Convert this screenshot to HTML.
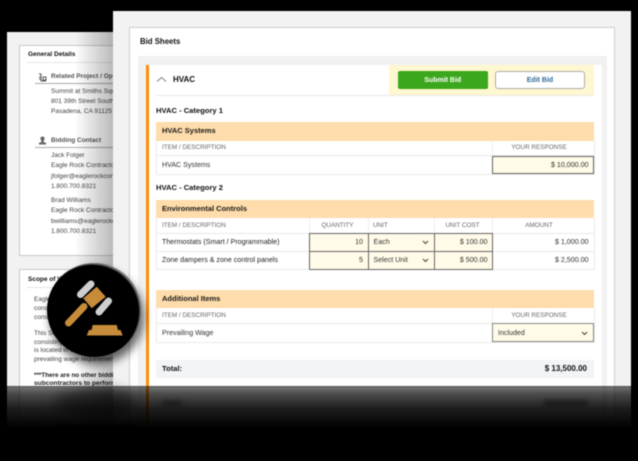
<!DOCTYPE html>
<html><head><meta charset="utf-8">
<style>
html,body{margin:0;padding:0;background:#000;}
#p{position:relative;width:638px;height:461px;overflow:hidden;background:#000;font-family:"Liberation Sans",sans-serif;}
#w{position:absolute;left:0;top:0;width:638px;height:461px;filter:blur(.4px);}
.a{position:absolute;}
.t{position:absolute;white-space:nowrap;line-height:10px;height:10px;color:#333;font-size:7.1px;}
.l{font-size:6.5px;color:#444;}
.b{font-weight:bold;color:#111;}
.band{position:absolute;left:156px;width:438px;height:18.5px;background:#fedcab;}
.band span{position:absolute;left:6px;top:4px;font-size:7.5px;font-weight:bold;line-height:10px;color:#1a1a1a;white-space:nowrap;}
.rowbox{position:absolute;left:156px;width:437px;border:1px solid #eaeaea;border-top:0;}
.hl{position:absolute;left:156px;width:438px;height:1px;background:#e8e8e8;}
.h{color:#666;font-size:6.35px;}
.inp{position:absolute;background:#fffbe8;border:1px solid #666;box-sizing:border-box;}
.dash{position:absolute;width:0;border-left:1px dotted #ddd;}
.r{text-align:right;}
.c{text-align:center;}
</style></head><body>
<div id="p"><div id="w">

<!-- left card -->
<div class="a" style="left:7px;top:32px;width:112px;height:400px;background:#f2f2f2;overflow:hidden;">
  <div class="a" style="left:12px;top:13px;width:110px;height:211px;background:#fff;border:1px solid #c8c8c8;box-sizing:border-box;"></div>
  <div class="a" style="left:12px;top:237px;width:110px;height:200px;background:#fff;border:1px solid #c8c8c8;box-sizing:border-box;"></div>
  <div class="a" style="left:20px;top:30px;width:90px;height:1px;background:#e5e5e5;"></div>
  <div class="a" style="left:28px;top:50.5px;width:90px;height:1px;background:#aaa;"></div>
  <div class="a" style="left:28px;top:114.5px;width:90px;height:1px;background:#aaa;"></div>
  <div class="a" style="left:20px;top:255px;width:90px;height:1px;background:#e5e5e5;"></div>
</div>
<div class="t b" style="left:28px;top:50px;font-size:6.5px;">General Details</div>
<svg class="a" style="left:38px;top:73px;" width="9" height="9" viewBox="0 0 9 9"><path d="M1 1h2v7h5M1 4h2M5 4h3v3H5zM1 6h2" fill="none" stroke="#555" stroke-width="1"/></svg>
<div class="t b l" style="left:51px;top:72px;color:#555;overflow:hidden;width:62px;">Related Project / Opportunity</div>
<div class="t l" style="left:51px;top:87px;">Summit at Smiths Square</div>
<div class="t l" style="left:51px;top:97px;">801 39th Street South</div>
<div class="t l" style="left:51px;top:107px;">Pasadena, CA 91125</div>
<svg class="a" style="left:38px;top:136px;" width="9" height="9" viewBox="0 0 9 9"><circle cx="4.5" cy="2.6" r="2.1" fill="#666"/><path d="M3.5 4h2l.5 2.5h2V8.5H1V6.5h2z" fill="#666"/></svg>
<div class="t b l" style="left:51px;top:136px;color:#555;">Bidding Contact</div>
<div class="t l" style="left:51px;top:151px;">Jack Folger</div>
<div class="t l" style="left:51px;top:161px;">Eagle Rock Contractors</div>
<div class="t l" style="left:51px;top:172px;">jfolger@eaglerockcontractors.com</div>
<div class="t l" style="left:51px;top:182px;">1.800.700.8321</div>
<div class="t l" style="left:51px;top:196px;">Brad Williams</div>
<div class="t l" style="left:51px;top:206px;">Eagle Rock Contractors</div>
<div class="t l" style="left:51px;top:217px;">bwilliams@eaglerockcontractors.com</div>
<div class="t l" style="left:51px;top:227px;">1.800.700.8321</div>
<div class="t b" style="left:28px;top:275px;font-size:6.5px;">Scope of Work</div>
<div class="t l" style="left:34px;top:295px;">Eagle</div>
<div class="t l" style="left:34px;top:304px;">consist</div>
<div class="t l" style="left:34px;top:313px;">consist</div>
<div class="t l" style="left:34px;top:329px;">This Scope</div>
<div class="t l" style="left:34px;top:338px;">consisting of</div>
<div class="t l" style="left:34px;top:346px;">is located in the</div>
<div class="t l" style="left:34px;top:355px;">prevailing wage requirements</div>
<div class="t b l" style="left:34px;top:371px;color:#222;font-size:6.3px;">***There are no other bidding</div>
<div class="t b l" style="left:34px;top:379px;color:#222;font-size:6.6px;">subcontractors to perform</div>
<!-- shadow gradient cast by front card -->
<div class="a" style="left:75px;top:32px;width:38px;height:400px;background:linear-gradient(90deg,rgba(0,0,0,0),rgba(0,0,0,.27));"></div>

<!-- front card -->
<div class="a" style="left:113px;top:11px;width:518px;height:420px;background:#f2f2f2;"></div>
<div class="a" style="left:129px;top:27px;width:486px;height:410px;background:#fff;border:1px solid #cfcfcf;box-sizing:border-box;"></div>
<div class="t b" style="left:140px;top:36.5px;font-size:7.8px;">Bid Sheets</div>
<div class="a" style="left:138px;top:56px;width:469px;height:380px;background:#f1f1f1;"></div>
<div class="a" style="left:146px;top:65px;width:456px;height:370px;background:#fff;"></div>
<div class="a" style="left:146px;top:65px;width:2.5px;height:370px;background:#ff8c00;"></div>

<!-- header -->
<div class="a" style="left:156px;top:95px;width:438px;height:1px;background:#e8e8e8;"></div>
<div class="a" style="left:389px;top:65px;width:205px;height:30px;background:#fff7cf;"></div>
<svg class="a" style="left:156px;top:76px;" width="11" height="7" viewBox="0 0 11 7"><path d="M1 5.5L5.500 1.500 10 5.500" fill="none" stroke="#888" stroke-width="1.100"/></svg>
<div class="t b" style="left:173px;top:75px;font-size:8px;">HVAC</div>
<div class="a" style="left:398px;top:71px;width:89.5px;height:18px;background:#3aa71c;border-radius:2px;color:#fff;font-size:7px;font-weight:bold;text-align:center;line-height:19.5px;">Submit Bid</div>
<div class="a" style="left:495px;top:71px;width:90px;height:18px;background:#fff;border:1px solid #aaa;box-sizing:border-box;border-radius:3px;color:#2f6a9a;font-size:7px;font-weight:bold;text-align:center;line-height:17.5px;">Edit Bid</div>

<!-- category 1 -->
<div class="t b" style="left:156px;top:105.5px;font-size:7.6px;">HVAC - Category 1</div>
<div class="band" style="top:122px;"><span>HVAC Systems</span></div>
<div class="rowbox" style="top:140.5px;height:33px;"></div>
<div class="hl" style="top:155px;"></div>
<div class="t h" style="left:162px;top:143px;">ITEM / DESCRIPTION</div>
<div class="dash" style="left:491.5px;top:140.5px;height:15px;"></div>
<div class="t h c" style="left:492px;top:143px;width:94px;">YOUR RESPONSE</div>
<div class="t" style="left:162px;top:160px;">HVAC Systems</div>
<div class="inp" style="left:491.5px;top:155.5px;width:102.5px;height:18.5px;"></div>
<div class="t r" style="left:492px;top:160px;width:96.5px;">$ 10,000.00</div>

<!-- category 2 -->
<div class="t b" style="left:156px;top:183px;font-size:7.6px;">HVAC - Category 2</div>
<div class="band" style="top:199.5px;"><span>Environmental Controls</span></div>
<div class="rowbox" style="top:218px;height:51px;"></div>
<div class="hl" style="top:233px;"></div>
<div class="hl" style="top:251px;"></div>
<div class="t h" style="left:162px;top:220.5px;">ITEM / DESCRIPTION</div>
<div class="t h c" style="left:309px;top:220.5px;width:57px;">QUANTITY</div>
<div class="t h" style="left:373px;top:220.5px;">UNIT</div>
<div class="t h c" style="left:434px;top:220.5px;width:57px;">UNIT COST</div>
<div class="t h c" style="left:492px;top:220.5px;width:94px;">AMOUNT</div>
<div class="dash" style="left:309px;top:218px;height:15px;"></div>
<div class="dash" style="left:367.5px;top:218px;height:15px;"></div>
<div class="dash" style="left:433.5px;top:218px;height:15px;"></div>
<div class="dash" style="left:491.5px;top:218px;height:15px;"></div>
<div class="t" style="left:162px;top:237px;color:#222;">Thermostats (Smart / Programmable)</div>
<div class="t" style="left:162px;top:255px;color:#222;">Zone dampers &amp; zone control panels</div>
<div class="inp" style="left:309px;top:233px;width:59.5px;height:18.5px;"></div>
<div class="inp" style="left:309px;top:251px;width:59.5px;height:18.5px;"></div>
<div class="inp" style="left:367.5px;top:233px;width:67px;height:18.5px;"></div>
<div class="inp" style="left:367.5px;top:251px;width:67px;height:18.5px;"></div>
<div class="inp" style="left:433.5px;top:233px;width:59px;height:18.5px;"></div>
<div class="inp" style="left:433.5px;top:251px;width:59px;height:18.5px;"></div>
<div class="t r" style="left:309px;top:237px;width:54px;">10</div>
<div class="t r" style="left:309px;top:255px;width:54px;">5</div>
<div class="t" style="left:373.5px;top:237px;">Each</div>
<div class="t" style="left:373.5px;top:255px;">Select Unit</div>
<svg class="a" style="left:422px;top:240px;" width="7" height="5" viewBox="0 0 7 5"><path d="M1 1l2.5 2.5L6 1" fill="none" stroke="#444" stroke-width="1.1"/></svg>
<svg class="a" style="left:422px;top:258px;" width="7" height="5" viewBox="0 0 7 5"><path d="M1 1l2.5 2.5L6 1" fill="none" stroke="#444" stroke-width="1.1"/></svg>
<div class="t r" style="left:434px;top:237px;width:53.5px;">$ 100.00</div>
<div class="t r" style="left:434px;top:255px;width:53.5px;">$ 500.00</div>
<div class="t r" style="left:492px;top:237px;width:96.5px;">$ 1,000.00</div>
<div class="t r" style="left:492px;top:255px;width:96.5px;">$ 2,500.00</div>

<!-- additional -->
<div class="band" style="top:289.5px;"><span>Additional Items</span></div>
<div class="rowbox" style="top:308px;height:33.5px;"></div>
<div class="hl" style="top:323px;"></div>
<div class="t h" style="left:162px;top:310.5px;">ITEM / DESCRIPTION</div>
<div class="dash" style="left:491.5px;top:308px;height:15px;"></div>
<div class="t h c" style="left:492px;top:310.5px;width:94px;">YOUR RESPONSE</div>
<div class="t" style="left:162px;top:327.5px;">Prevailing Wage</div>
<div class="inp" style="left:491.5px;top:323px;width:102.5px;height:18.5px;border-color:#888;"></div>
<div class="t" style="left:498px;top:327.5px;">Included</div>
<svg class="a" style="left:581px;top:330.5px;" width="7" height="5" viewBox="0 0 7 5"><path d="M1 1l2.5 2.5L6 1" fill="none" stroke="#444" stroke-width="1.1"/></svg>

<!-- total -->
<div class="a" style="left:156px;top:359.5px;width:438px;height:18.5px;background:#f3f4f6;"></div>
<div class="t b" style="left:162px;top:364px;font-size:7.6px;">Total:</div>
<div class="t b r" style="left:480px;top:364px;width:107px;font-size:8px;">$ 13,500.00</div>

<!-- reflection fade -->
<div class="a" style="left:0;top:386px;width:638px;height:75px;background:linear-gradient(180deg,rgba(0,0,0,.52) 0,rgba(0,0,0,.7) 8px,rgba(0,0,0,.88) 22px,#000 42px);"></div>
<div class="a" style="left:55px;top:388px;width:80px;height:30px;border-radius:50%;background:rgba(0,0,0,.45);filter:blur(7px);"></div>
<div class="a" style="left:162px;top:400px;width:20px;height:6px;background:rgba(0,0,0,.35);filter:blur(2px);"></div>
<div class="a" style="left:544px;top:400px;width:44px;height:6px;background:rgba(0,0,0,.4);filter:blur(2px);"></div>
<div class="a" style="left:0;top:385.5px;width:638px;height:1px;background:rgba(60,60,60,.6);"></div>
<div class="a" style="left:0;top:360px;width:7px;height:101px;background:#000;"></div>
<div class="a" style="left:631px;top:386px;width:7px;height:75px;background:#000;"></div>

<!-- gavel badge -->
<div class="a" style="left:47px;top:263px;width:94px;height:94px;border-radius:50%;background:#000;box-shadow:3px 7px 9px rgba(0,0,0,.6),inset -1.5px 1.5px 1px rgba(190,190,190,.6);"></div>
<svg class="a" style="left:0;top:0;" width="638" height="461" viewBox="0 0 638 461">
  <path d="M80.500 294.500L91 284" stroke="#cfcfcf" stroke-width="7" stroke-linecap="round" fill="none"/>
  <path d="M99 312L108.500 301" stroke="#cfcfcf" stroke-width="7" stroke-linecap="round" fill="none"/>
  <path d="M96.700 286.700L105.700 296.700 91.700 308.300 83.300 298.300Z" fill="#c68c3a"/>
  <path d="M84 306.500L68.500 323" stroke="#c68c3a" stroke-width="7" stroke-linecap="round" fill="none"/>
  <path d="M92.700 325H116.700L118 330H120.500L122.700 335.500H86.700L89 330H91.500Z" fill="#c68c3a"/>
</svg>

</div></div>
</body></html>
